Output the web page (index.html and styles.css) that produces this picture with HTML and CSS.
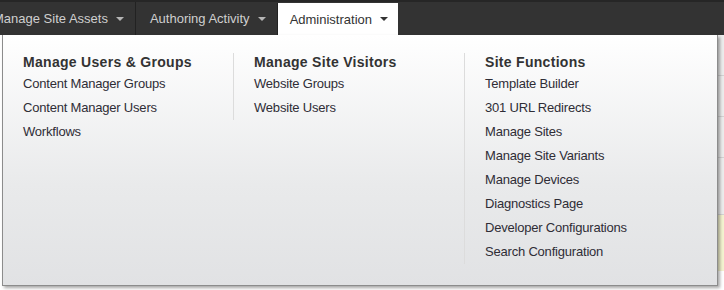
FILE: index.html
```html
<!DOCTYPE html>
<html lang="en">
<head>
    <meta charset="UTF-8">
    <title>Administration</title>
    <link rel="stylesheet" href="styles.css">
</head>
<body>
    <div class="topbar">
        <ul class="nav">
            <li class="tab first">Manage Site Assets <span class="caret"></span></li>
            <li class="tab">Authoring Activity <span class="caret"></span></li>
            <li class="tab active">Administration <span class="caret"></span></li>
        </ul>

        <div class="dropdown">
            <div class="column">
                <h3>Manage Users &amp; Groups</h3>
                <a href="#">Content Manager Groups</a>
                <a href="#">Content Manager Users</a>
                <a href="#">Workflows</a>
            </div>
            <div class="column divided">
                <h3>Manage Site Visitors</h3>
                <a href="#">Website Groups</a>
                <a href="#">Website Users</a>
            </div>
            <div class="column divided">
                <h3>Site Functions</h3>
                <a href="#">Template Builder</a>
                <a href="#">301 URL Redirects</a>
                <a href="#">Manage Sites</a>
                <a href="#">Manage Site Variants</a>
                <a href="#">Manage Devices</a>
                <a href="#">Diagnostics Page</a>
                <a href="#">Developer Configurations</a>
                <a href="#">Search Configuration</a>
            </div>
        </div>
    </div>

    <div class="page">
        <div class="row"></div>
        <div class="row"></div>
        <div class="row"></div>
        <div class="row tall"></div>
        <div class="notice"></div>
    </div>
</body>
</html>
```

FILE: styles.css
```css
body {
    margin: 0;
    font-family: "Liberation Sans", Arial, sans-serif;
    background: #fff;
}
.topbar {
    position: relative;
    z-index: 2;
}
.nav {
    display: flex;
    margin: 0;
    padding: 0;
    list-style: none;
    height: 35px;
    box-sizing: border-box;
    background: #333;
    border-top: 2px solid #262626;
}
.tab {
    display: flex;
    align-items: center;
    padding: 0 11px 0 14px;
    border-left: 1px solid #222;
    color: #cfcfcf;
    font-size: 13px;
}
.tab.first {
    margin-left: -7px;
    border-left: none;
    padding-left: 0;
    padding-right: 11px;
}
.tab.active {
    background: #fff;
    color: #333;
    margin-top: 1px;
    padding-left: 12px;
    padding-right: 10px;
}
.caret {
    display: inline-block;
    width: 0;
    height: 0;
    margin-left: 8px;
    border-left: 4px solid transparent;
    border-right: 4px solid transparent;
    border-top: 4px solid #b5b5b5;
}
.active .caret {
    border-top-color: #333;
}
.dropdown {
    position: absolute;
    top: 35px;
    left: 2px;
    width: 716px;
    height: 251px;
    box-sizing: border-box;
    display: flex;
    align-items: flex-start;
    padding: 18px 20px 0 20px;
    background: linear-gradient(#ffffff, #e9eaeb 60%, #e1e2e4);
    border: 1px solid #8c8c8c;
    border-top: none;
    box-shadow: 2px 2px 3px rgba(0, 0, 0, 0.35);
}
.column {
    width: 210px;
    display: flex;
    flex-direction: column;
}
.column.divided {
    border-left: 1px solid #dcdcdc;
    padding-left: 20px;
}
.column h3 {
    margin: 0;
    font-size: 14px;
    line-height: 19px;
    letter-spacing: 0.3px;
    font-weight: bold;
    color: #333;
}
.column a {
    font-size: 13px;
    line-height: 24px;
    letter-spacing: -0.2px;
    color: #2f2d36;
    text-decoration: none;
}
.page {
    min-height: 255px;
}
.row {
    height: 40px;
    margin-left: 30px;
    border-bottom: 1px solid #d3d3d3;
    background: #ececec;
}
.row.tall {
    height: 56px;
}
.notice {
    height: 56px;
    margin-left: 30px;
    background: #f4f3d0;
    border-left: 1px solid #d8d79a;
}
```
